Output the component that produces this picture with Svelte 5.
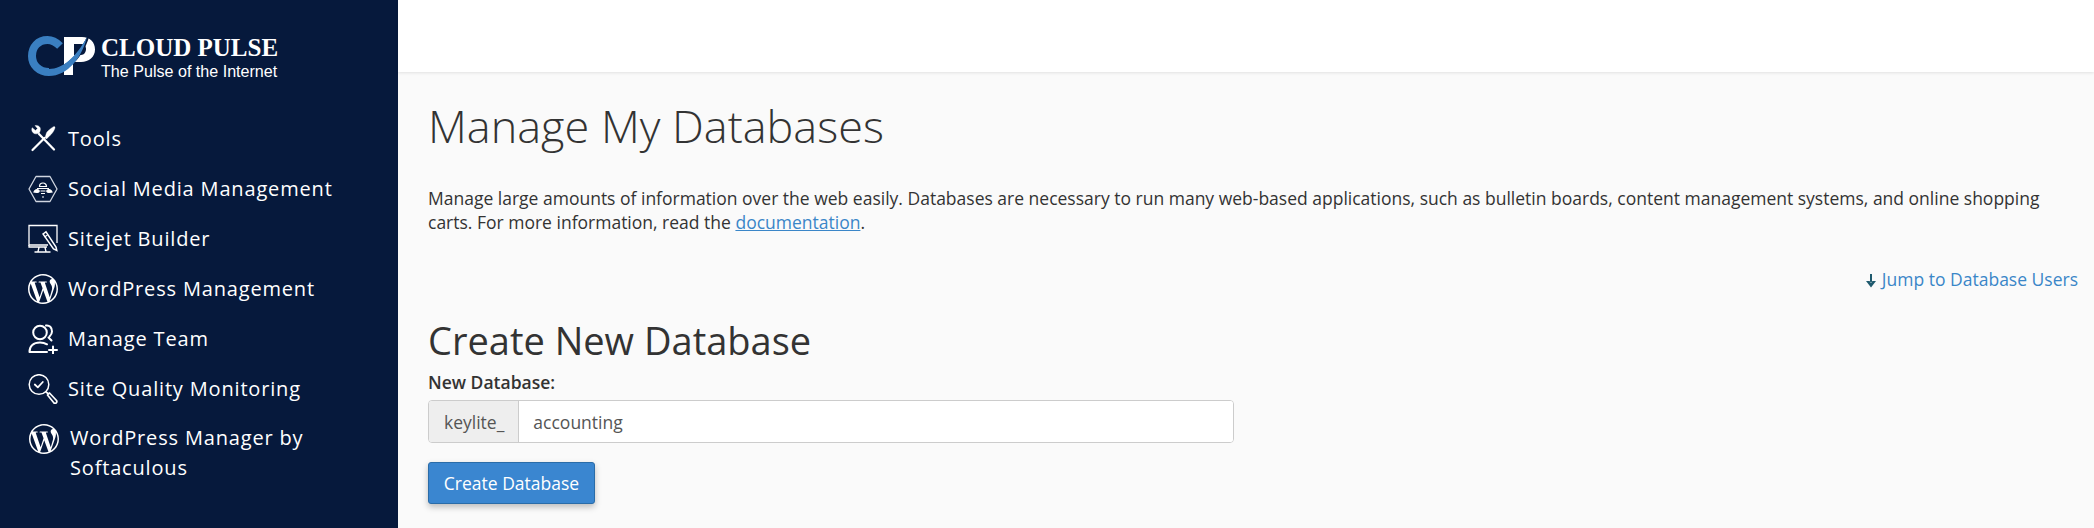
<script>
  const nav = [
    { label: 'Tools', icon: 'tools' },
    { label: 'Social Media Management', icon: 'social' },
    { label: 'Sitejet Builder', icon: 'sitejet' },
    { label: 'WordPress Management', icon: 'wp' },
    { label: 'Manage Team', icon: 'team' },
    { label: 'Site Quality Monitoring', icon: 'quality' },
    { label: 'WordPress Manager by Softaculous', icon: 'wp', wide: true }
  ];
</script>

{#snippet wpIcon()}
  <path transform="scale(1.25)" fill="#fff" fill-rule="evenodd" d="M21.469 6.825c.84 1.537 1.318 3.3 1.318 5.175 0 3.979-2.156 7.456-5.363 9.325l3.295-9.527c.615-1.54.82-2.771.82-3.864 0-.405-.026-.78-.07-1.11m-7.981.105c.647-.03 1.232-.105 1.232-.105.582-.075.514-.93-.067-.899 0 0-1.755.135-2.88.135-1.064 0-2.85-.15-2.85-.15-.585-.03-.661.855-.075.885 0 0 .54.061 1.125.09l1.68 4.605-2.37 7.08L5.354 6.9c.649-.03 1.234-.1 1.234-.1.585-.075.516-.93-.065-.896 0 0-1.746.138-2.874.138-.2 0-.438-.008-.69-.015C4.911 3.15 8.235 1.215 12 1.215c2.809 0 5.365 1.072 7.286 2.833-.046-.003-.091-.009-.141-.009-1.06 0-1.812.923-1.812 1.914 0 .89.513 1.643 1.06 2.531.411.72.89 1.643.89 2.977 0 .915-.354 1.994-.821 3.479l-1.075 3.585-3.9-11.61.001.014zM12 22.784c-1.059 0-2.081-.153-3.048-.437l3.237-9.406 3.315 9.087c.024.053.05.101.078.149-1.12.393-2.325.609-3.582.609M1.211 12c0-1.564.336-3.05.935-4.39L7.29 21.709C3.694 19.96 1.212 16.271 1.211 12M12 0C5.385 0 0 5.385 0 12s5.385 12 12 12 12-5.385 12-12S18.615 0 12 0" />
{/snippet}

<div class="page">
  <aside class="sidebar">
    <div class="brand">
      <svg class="brand-mark" viewBox="0 0 70 40" aria-hidden="true">
        <path fill="#fff" d="M36 1h18c8 0 13 5 13 12.500S61 26 53 26h-8v13h-9z" />
        <path fill="#06193c" d="M46 8h7c3 0 5 2 5 5s-2 6-5 6h-7z" />
        <path fill="none" stroke="#3a7fc1" stroke-width="8" d="M32 10C28 6 24 4 19.500 4 10 4 4 11 4 20s7 16 17 16" />
        <path fill="#06193c" d="M24 33c14-2 26-14 35-32h2c-6 20-20 35-37 36z" />
        <path fill="#3a7fc1" d="M21 33c14 0 27-12 38-32-5 20-19 39-38 39z" />
      </svg>
      <div class="brand-text">
        <div class="brand-name">CLOUD PULSE</div>
        <div class="brand-tag">The Pulse of the Internet</div>
      </div>
    </div>
    <nav class="nav">
      {#each nav as item}
        <div class="nav-item" class:wide={item.wide}>
          <svg class="nav-icon" viewBox="0 0 30 30" aria-hidden="true">
            {#if item.icon === 'tools'}
              <g fill="none" stroke="#fff" stroke-linejoin="round">
                <path d="M11 10 26 25.500" stroke-width="2.200" stroke-linecap="round" />
                <path d="M11.500 8.500c-2 2-5.500 1.800-7-.5-.8-1.300-1-3-.3-4.300L7.500 6.500l2-2L7 1.600c2-.6 4 .2 5 2 .6 1.300.5 3-.5 4.900z" fill="#fff" stroke-width=".4" />
                <path d="M4.500 26 16.500 14" stroke-width="2.200" stroke-linecap="round" />
                <path d="M17 13.500l1.500 1.500 3.500-3.500c2-1.500 4-4.500 5-7.500.3-1-.5-1.800-1.500-1.300-2.500 1.200-5.500 3.800-7 6z" fill="#fff" stroke-width=".3" />
              </g>
            {:else if item.icon === 'social'}
              <path d="M8 2.500h14L29 15l-7 12.500H8L1 15z" fill="none" stroke="#cfd5e0" stroke-width="1.300" stroke-linejoin="round" />
              <g fill="none" stroke="#fff" stroke-width="1.200">
                <path d="M11.500 12.500a3.500 3.500 0 0 1 7 0zM9 14.500h12" />
                <path d="M6 18c1-2.500 3-3 4.500-2s.5 2.500-1.500 2.500zM24 18c-1-2.500-3-3-4.500-2s-.5 2.500 1.500 2.500z" fill="#fff" />
                <path d="M12.500 17h5M13 19.500h4M14 23h2" />
              </g>
            {:else if item.icon === 'sitejet'}
              <g fill="none" stroke="#fff" stroke-width="1.300">
                <path d="M29 19V1.500H1V21h19" />
                <path d="M1 21v2h18M11 23.500l-1 4M17 23.500l1 4M6.500 28h16" />
                <path d="M15 10l3-2.200 10 15.200.8 3.500-3.300-1.500z" fill="#06193c" stroke-width="1.500" />
                <path d="M16.500 13l3-2" stroke-width="1.200" />
              </g>
            {:else if item.icon === 'wp'}
              {@render wpIcon()}
            {:else if item.icon === 'team'}
              <g fill="none" stroke="#fff" stroke-width="2" stroke-linecap="round">
                <circle cx="12" cy="8.500" r="6.800" />
                <path d="M18 1.500c3.500-.5 6 2 6 6 0 2-1 3.500-2.500 5M20.500 13.500l3 3" />
                <path d="M1.500 28c0-6 4-9.500 10.500-9.500 3 0 5 .6 7 1.800M1.500 28H19M25 22.500v7M21 26h8" />
              </g>
            {:else if item.icon === 'quality'}
              <g fill="none" stroke="#fff" stroke-width="1.500" stroke-linecap="round" stroke-linejoin="round">
                <circle cx="11" cy="10.500" r="9.800" />
                <path d="M6.800 10.500l3 2.800 5-5.300" stroke-width="1.800" />
                <path d="M18 18l2 1.500M19.500 21l2-2 7 7.500a1.800 1.800 0 0 1-2.500 2.500z" stroke-width="1.700" />
              </g>
            {/if}
          </svg>
          <span>{item.label}</span>
        </div>
      {/each}
    </nav>
  </aside>

  <div class="main">
    <header class="topbar"></header>
    <section class="content">
      <h1>Manage My Databases</h1>
      <p class="intro">
        Manage large amounts of information over the web easily. Databases are necessary to run many web-based applications, such as bulletin boards, content management systems, and online shopping carts. For more information, read the <a href="#docs">documentation</a>.
      </p>
      <div class="jump">
        <a href="#users">
          <svg class="jump-arrow" viewBox="0 0 12 14" aria-hidden="true">
            <path fill="#1f5a6e" d="M5 0h2v8.500h-2zM1 7l5 6.500L11 7H7.500L6 8.500 4.500 7z" />
          </svg>
          Jump to Database Users
        </a>
      </div>
      <h2>Create New Database</h2>
      <label class="field-label" for="db">New Database:</label>
      <div class="input-group">
        <span class="prefix">keylite_</span>
        <input id="db" type="text" value="accounting" />
      </div>
      <button class="primary" type="button">Create Database</button>
    </section>
  </div>
</div>

<style>
  :global(body) {
    margin: 0;
    font-family: "Open Sans", sans-serif;
    background: #fafafa;
  }

  .page {
    display: flex;
    width: 2094px;
    height: 528px;
    overflow: hidden;
  }

  .sidebar {
    flex: 0 0 398px;
    background: #06193c;
    color: #fff;
    padding: 36px 0 0 28px;
    box-sizing: border-box;
  }

  .brand {
    display: flex;
    align-items: flex-start;
    height: 78px;
  }

  .brand-mark {
    width: 70px;
    height: 40px;
    margin-right: 3px;
  }

  .brand-name {
    font-family: "Liberation Serif", serif;
    font-size: 25px;
    font-weight: 700;
    line-height: 24px;
    white-space: nowrap;
  }

  .brand-tag {
    font-family: "Liberation Sans", sans-serif;
    font-size: 16.100px;
    line-height: 18px;
    margin-top: 2px;
    white-space: nowrap;
  }

  .nav-item {
    display: flex;
    align-items: center;
    height: 50px;
    font-size: 20px;
    letter-spacing: 0.83px;
  }

  .nav-item span {
    margin-left: 10px;
    margin-top: -1px;
  }

  .nav-icon {
    width: 30px;
    height: 30px;
    flex: none;
  }

  .nav-item.wide {
    align-items: flex-start;
    height: auto;
    padding: 10px 40px 0 1px;
    line-height: 30px;
  }

  .nav-item.wide span {
    margin-left: 11px;
  }

  .main {
    flex: 1;
    min-width: 0;
  }

  .topbar {
    height: 72px;
    background: #fff;
    box-shadow: 0 1px 3px rgba(0, 0, 0, 0.1);
  }

  .content {
    padding: 0 16px 0 30px;
    color: #333;
  }

  h1 {
    margin: 29px 0 0;
    font-size: 45px;
    font-weight: 300;
    line-height: 50px;
  }

  .intro {
    margin: 35px 0 0;
    font-size: 17.500px;
    line-height: 24px;
  }

  a {
    color: #3a86c8;
  }

  .jump {
    margin-top: 31px;
    text-align: right;
    font-size: 17.500px;
    line-height: 28px;
  }

  .jump a {
    text-decoration: none;
  }

  .jump-arrow {
    width: 12px;
    height: 14px;
    vertical-align: -2px;
  }

  h2 {
    margin: 25px 0 0;
    font-size: 38px;
    font-weight: 500;
    line-height: 44px;
  }

  .field-label {
    display: block;
    margin-top: 8px;
    font-size: 17.500px;
    font-weight: 600;
    line-height: 24px;
  }

  .input-group {
    display: flex;
    width: 806px;
    height: 43px;
    margin-top: 6px;
    box-sizing: border-box;
    border: 1px solid #ccc;
    border-radius: 4px;
    overflow: hidden;
    background: #fff;
    font-size: 17.500px;
  }

  .prefix {
    display: flex;
    align-items: center;
    padding: 0 14px 0 15px;
    background: #eee;
    border-right: 1px solid #ccc;
    color: #555;
  }

  input {
    flex: 1;
    border: 0;
    outline: 0;
    padding: 0 14px;
    font: inherit;
    color: #555;
  }

  .primary {
    display: block;
    width: 167px;
    height: 42px;
    margin-top: 19px;
    border: 1px solid #2a6ca8;
    border-radius: 3px;
    background: #3a86d0;
    color: #fff;
    font: inherit;
    font-size: 17.500px;
    box-shadow: 0 3px 6px rgba(0, 0, 0, 0.25);
  }
</style>
